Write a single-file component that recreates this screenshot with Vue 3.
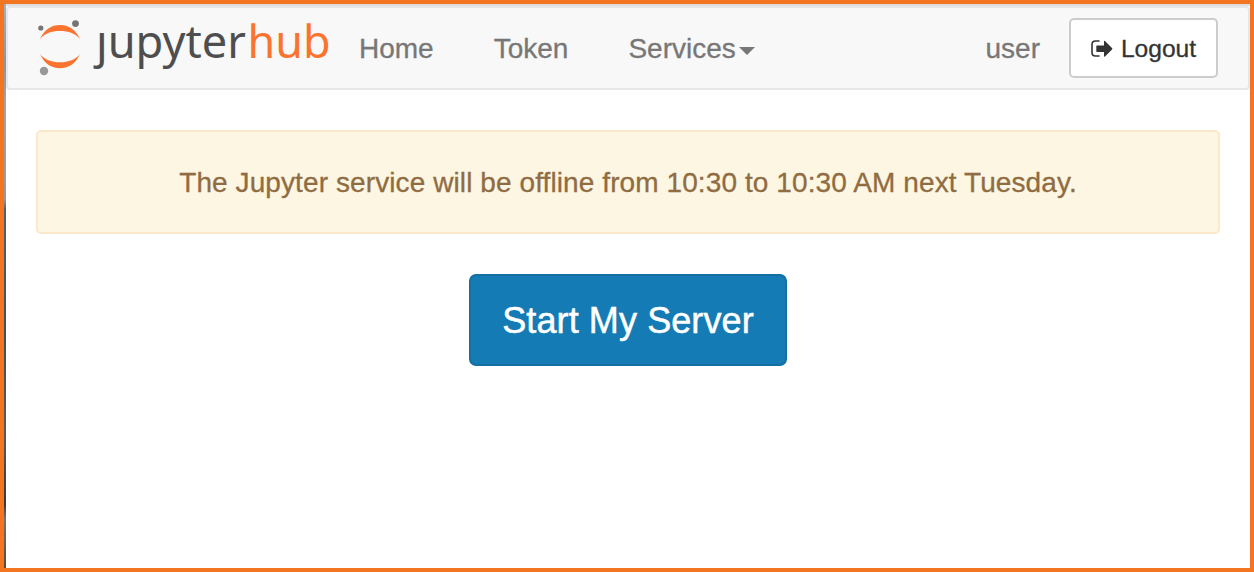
<script setup>
const links = ['Home', 'Token']
const message = 'The Jupyter service will be offline from 10:30 to 10:30 AM next Tuesday.'
</script>

<template>
  <div class="frame">
    <div class="edge"></div>
    <div class="page">
      <nav class="navbar">
        <svg class="logo" width="300" height="64" viewBox="0 0 300 64" role="img" aria-label="jupyterhub">
          <g fill="#fa7430">
            <path d="M10 29.200C14 19.500 21.500 15 30 15S46 19.500 50 29.200C46 23.500 38.500 20.900 30 20.900S14 23.500 10 29.200Z" />
            <path d="M10 44C14 53.500 21.500 58.200 30 58.200S46 53.500 50 44C46 49.500 38.500 52.300 30 52.300S14 49.500 10 44Z" />
          </g>
          <circle cx="10.800" cy="18" r="2.600" fill="#757575" />
          <circle cx="45.500" cy="13.600" r="3.400" fill="#757575" />
          <circle cx="14" cy="61" r="4.200" fill="#989898" />
          <text class="word gray" x="66" y="48" textLength="150" lengthAdjust="spacingAndGlyphs">ȷupyter</text>
          <text class="word orange" x="217.500" y="48" textLength="83" lengthAdjust="spacingAndGlyphs">hub</text>
        </svg>
        <a v-for="l in links" :key="l" class="link">{{ l }}</a>
        <a class="link services">Services<i class="caret"></i></a>
        <span class="user">user</span>
        <button class="logout">
          <svg width="22" height="18" viewBox="0 0 22 18">
            <path d="M8 1H4.500Q1 1 1 4.500V12.500Q1 16 4.500 16H8" fill="none" stroke="#333" stroke-width="1.600" stroke-linecap="round" />
            <path d="M6 5.500H13V1.500Q13 .2 14 1L21 8Q21.800 8.700 21 9.400L14 16.400Q13 17.200 13 15.900V12H6Q5.300 12 5.300 11.300V6.200Q5.300 5.500 6 5.500Z" fill="#333" />
          </svg>
          <span>Logout</span>
        </button>
      </nav>
      <div class="alert"><span>{{ message }}</span></div>
      <button class="start"><span>Start My Server</span></button>
    </div>
  </div>
</template>

<style>
body { margin: 0; background: #fff; }
</style>

<style scoped>
.frame {
  box-sizing: border-box;
  width: 1254px;
  height: 572px;
  border: 4px solid #f47521;
  background: #fff;
  display: flex;
  font-family: "Liberation Sans", Arial, sans-serif;
  font-size: 28px;
  -webkit-text-stroke: 0.3px currentColor;
}
.edge {
  width: 2px;
  background: linear-gradient(#9fb0c0 0, #8796a6 60px, #a2a3a5 100px, #98999c 195px, #4b6274 205px, #38505f 330px, #555b5c 430px, #303a40 500px, #77736c 515px, #57483b 564px);
}
.page {
  flex: 1;
  display: flex;
  flex-direction: column;
  border-top: 2px solid #dcdddd;
}
.navbar {
  box-sizing: border-box;
  height: 84px;
  border: 2px solid #e7e7e7;
  border-radius: 4px;
  background: #f8f8f8;
  display: flex;
  align-items: center;
  padding: 0 30px 0 22px;
  color: #777;
}
.logo { flex: none; overflow: visible; align-self: flex-start; margin-top: 2px; }
.word { font-family: "Noto Sans", "Open Sans", sans-serif; font-size: 45px; }
.gray { fill: #4e4e4e; color: #4e4e4e; }
.orange { fill: #fa7430; color: #fa7430; }
.link { margin-left: 29px; margin-right: 31px; padding-top: 2px; line-height: 40px; }
.services { display: flex; align-items: center; margin-right: 0; }
.caret {
  border: 8px solid transparent;
  border-top-color: #777;
  border-bottom: 0;
  margin: 3px 0 0 3px;
}
.user { margin-left: auto; margin-right: 29px; padding-top: 2px; }
button { font-family: inherit; box-sizing: border-box; }
.logout {
  width: 149px;
  height: 60px;
  padding: 0;
  border: 2px solid #ccc;
  border-radius: 5px;
  background: #fff;
  color: #333;
  font-size: 24.600px;
  display: flex;
  align-items: center;
  justify-content: center;
  gap: 8px;
}
.logout svg { margin-top: 2px; }
.logout span { padding-top: 1px; }
.alert {
  box-sizing: border-box;
  height: 104px;
  margin: 40px 30px;
  padding-top: 2px;
  border: 2px solid #fbe8cb;
  border-radius: 5px;
  background: #fdf6e2;
  color: #8f6c42;
  letter-spacing: 0.095px;
  display: flex;
  align-items: center;
  justify-content: center;
}
.start {
  align-self: center;
  width: 318px;
  height: 92px;
  padding: 2px 0 0;
  border: 2px solid #146fa3;
  border-radius: 7px;
  background: #147bb4;
  color: #fff;
  font-size: 36px;
  letter-spacing: 0.1px;
  -webkit-text-stroke: 0.5px currentColor;
}
</style>
